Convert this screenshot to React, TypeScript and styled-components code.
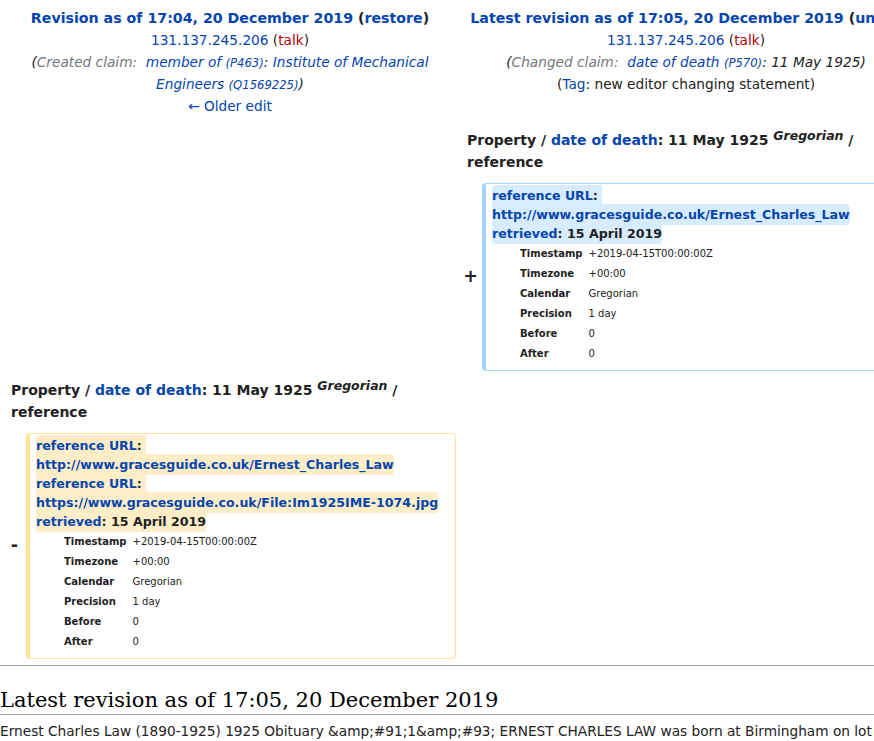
import React from 'react';
import styled, { createGlobalStyle } from 'styled-components';

const Global = createGlobalStyle`
  html, body { margin: 0; padding: 0; overflow: hidden; background: #fff; }
  body { font-family: "DejaVu Sans", sans-serif; color: #222; }
`;

const Page = styled.div`
  width: 916px;
`;

const DiffGrid = styled.div`
  display: grid;
  grid-template-columns: 18px 430px 18px 430px;
  column-gap: 4px;
  row-gap: 4px;
  padding: 4px;
`;

const HeaderCell = styled.div`
  grid-column: span 2;
  text-align: center;
  font-size: 13.7px;
  line-height: 22px;
  padding: 3px 0 4px;
`;

const HeaderLine = styled.div``;

const TitleLine = styled.div`
  font-weight: bold;
  font-size: 14.2px;
`;

const Link = styled.a`
  color: #0645ad;
  text-decoration: none;
`;

const RedLink = styled.a`
  color: #ba0000;
  text-decoration: none;
`;

const Comment = styled.span`
  font-style: italic;
`;

const AutoComment = styled.span`
  color: #72777d;
`;

const EntityId = styled.span`
  font-size: 0.85em;
  line-height: 1;
`;

const LineNo = styled.div`
  grid-column: span 2;
  font-size: 14px;
  font-weight: bold;
  line-height: 22px;
  padding: 4px 7px 6px;
`;

const Calendar = styled.sup`
  font-size: 12.5px;
  font-style: italic;
  line-height: 0;
  vertical-align: 5px;
`;

const Spacer = styled.div`
  grid-column: span 2;
`;

const Marker = styled.div`
  display: flex;
  align-items: center;
  justify-content: center;
  padding-left: 3px;
  font-size: 17.5px;
  font-weight: bold;
  line-height: 1.2;
`;

const ChangeBox = styled.div<{ $kind: 'added' | 'deleted' }>`
  border-style: solid;
  border-width: 1px 1px 1px 4px;
  border-color: ${p => (p.$kind === 'added' ? '#a3d3ff' : '#ffe49c')};
  border-radius: 4px;
  padding: 2px 6px 6px;
  font-size: 12.6px;
  line-height: 19.2px;
  min-width: 0;
  overflow: hidden;
`;

const Snak = styled.div`
  white-space: pre-wrap;
`;

const Change = styled.span<{ $kind: 'added' | 'deleted' }>`
  font-weight: bold;
  background: ${p => (p.$kind === 'added' ? '#d8ecff' : '#feeec8')};
  padding: 3px 0;
  border-radius: 4px;
`;

const Details = styled.div`
  display: grid;
  grid-template-columns: max-content 1fr;
  grid-auto-rows: 20px;
  column-gap: 6px;
  align-items: center;
  margin-left: 28px;
  font-size: 10px;
  line-height: 12px;
`;

const DetailLabel = styled.div`
  font-weight: bold;
`;

const DetailValue = styled.div``;

const Rule = styled.div`
  height: 1px;
  background: #a2a9b1;
  margin-top: 2px;
  width: 874px;
`;

const CurrentTitle = styled.h2`
  margin: 21px 0 0;
  font-family: "DejaVu Serif", serif;
  font-weight: normal;
  font-size: 21px;
  line-height: 27px;
  color: #000;
  border-bottom: 1px solid #a2a9b1;
  width: 874px;
`;

const BodyText = styled.div`
  font-size: 13.7px;
  line-height: 22px;
  padding-top: 5px;
  white-space: nowrap;
  width: 874px;
  overflow: hidden;
`;

type Kind = 'added' | 'deleted';

const details: [string, string][] = [
  ['Timestamp', '+2019-04-15T00:00:00Z'],
  ['Timezone', '+00:00'],
  ['Calendar', 'Gregorian'],
  ['Precision', '1 day'],
  ['Before', '0'],
  ['After', '0'],
];

const PropertyLine: React.FC = () => (
  <>
    Property / <Link href="#">date of death</Link>: 11 May 1925 <Calendar>Gregorian</Calendar> / reference
  </>
);

const RefSnak: React.FC<{ kind: Kind; prop: string; value: string }> = ({ kind, prop, value }) => (
  <Snak>
    <Change $kind={kind}>
      <Link href="#">{prop}</Link>: <Link href="#">{value}</Link>
    </Change>
  </Snak>
);

const Retrieved: React.FC<{ kind: Kind }> = ({ kind }) => (
  <Snak>
    <Change $kind={kind}>
      <Link href="#">retrieved</Link>: 15 April 2019
    </Change>
  </Snak>
);

const DetailTable: React.FC = () => (
  <Details>
    {details.map(([k, v]) => (
      <React.Fragment key={k}>
        <DetailLabel>{k}</DetailLabel>
        <DetailValue>{v}</DetailValue>
      </React.Fragment>
    ))}
  </Details>
);

export default function App() {
  return (
    <Page>
      <Global />
      <DiffGrid>
        <HeaderCell>
          <TitleLine>
            <Link href="#">Revision as of 17:04, 20 December 2019</Link> (<Link href="#">restore</Link>)
          </TitleLine>
          <HeaderLine>
            <Link href="#">131.137.245.206</Link> (<RedLink href="#">talk</RedLink>)
          </HeaderLine>
          <HeaderLine>
            <Comment>
              (<AutoComment>{'Created claim:\u00a0'}</AutoComment>{' '}
              <Link href="#">
                member of <EntityId>(P463)</EntityId>
              </Link>
              :{' '}
              <Link href="#">
                Institute of Mechanical Engineers <EntityId>(Q1569225)</EntityId>
              </Link>
              )
            </Comment>
          </HeaderLine>
          <HeaderLine>
            <Link href="#">← Older edit</Link>
          </HeaderLine>
        </HeaderCell>
        <HeaderCell>
          <TitleLine>
            <Link href="#">Latest revision as of 17:05, 20 December 2019</Link> (<Link href="#">undo</Link>)
          </TitleLine>
          <HeaderLine>
            <Link href="#">131.137.245.206</Link> (<RedLink href="#">talk</RedLink>)
          </HeaderLine>
          <HeaderLine>
            <Comment>
              (<AutoComment>{'Changed claim:\u00a0'}</AutoComment>{' '}
              <Link href="#">
                date of death <EntityId>(P570)</EntityId>
              </Link>
              : 11 May 1925)
            </Comment>
          </HeaderLine>
          <HeaderLine>
            (<Link href="#">Tag</Link>: new editor changing statement)
          </HeaderLine>
        </HeaderCell>

        <LineNo />
        <LineNo>
          <PropertyLine />
        </LineNo>

        <Spacer />
        <Marker>+</Marker>
        <ChangeBox $kind="added">
          <RefSnak kind="added" prop="reference URL" value="http://www.gracesguide.co.uk/Ernest_Charles_Law" />
          <Retrieved kind="added" />
          <DetailTable />
        </ChangeBox>

        <LineNo>
          <PropertyLine />
        </LineNo>
        <LineNo />

        <Marker>-</Marker>
        <ChangeBox $kind="deleted">
          <RefSnak kind="deleted" prop="reference URL" value="http://www.gracesguide.co.uk/Ernest_Charles_Law" />
          <RefSnak kind="deleted" prop="reference URL" value="https://www.gracesguide.co.uk/File:Im1925IME-1074.jpg" />
          <Retrieved kind="deleted" />
          <DetailTable />
        </ChangeBox>
        <Spacer />
      </DiffGrid>
      <Rule />
      <CurrentTitle>Latest revision as of 17:05, 20 December 2019</CurrentTitle>
      <BodyText>
        Ernest Charles Law (1890-1925) 1925 Obituary &amp;amp;#91;1&amp;amp;#93; ERNEST CHARLES LAW was born at Birmingham on lot
      </BodyText>
    </Page>
  );
}
